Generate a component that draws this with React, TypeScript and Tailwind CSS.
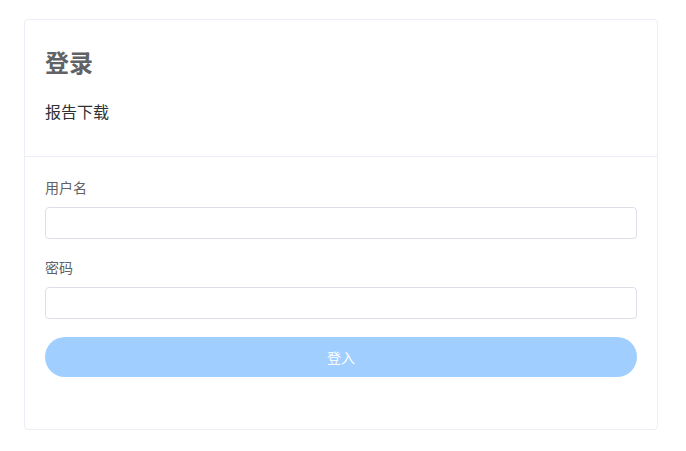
import React from "react";

export default function App() {
  const font = { fontFamily: '"Noto Sans CJK SC", "Noto Sans", sans-serif' };
  return (
    <div className="w-[686px] h-[451px] bg-white" style={font}>
      <div className="pt-[19px] pl-[24px] pr-[28px]">
        <div className="w-[634px] h-[411px] border border-[#ebeef5] rounded-[4px] bg-white overflow-hidden">
          <div className="px-5 pt-[26px] pb-[33px] border-b border-[#ebeef5]">
            <div className="h-8 leading-8 text-[24px] font-bold text-[#606266]">登录</div>
            <div className="mt-[21px] h-6 leading-6 text-[16px] text-[#303133]">报告下载</div>
          </div>
          <div className="px-5 pt-[20px]">
            <div className="h-5 leading-5 text-[14px] text-[#606266]">用户名</div>
            <input
              type="text"
              className="mt-[10px] block w-full h-8 border border-[#dcdfe6] rounded-[4px] px-3 text-[14px] outline-none"
            />
            <div className="mt-[18px] h-5 leading-5 text-[14px] text-[#606266]">密码</div>
            <input
              type="password"
              className="mt-[10px] block w-full h-8 border border-[#dcdfe6] rounded-[4px] px-3 text-[14px] outline-none"
            />
            <button
              type="button"
              className="mt-[18px] block w-full h-10 rounded-[20px] bg-[#a0cfff] text-white text-[14px]"
            >
              登入
            </button>
          </div>
        </div>
      </div>
    </div>
  );
}
